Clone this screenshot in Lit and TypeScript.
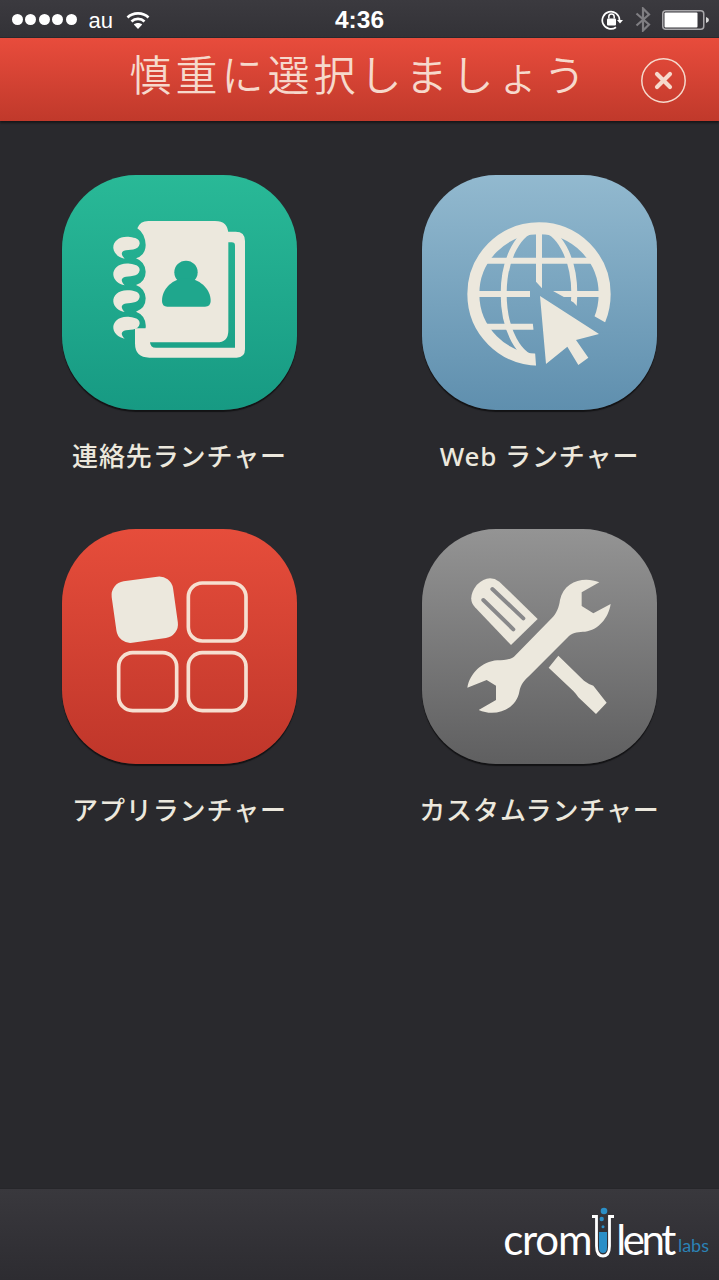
import { LitElement, html, css, svg } from 'lit';
import { customElement } from 'lit/decorators.js';

// Icon paths use one viewBox unit = 1/3 px, so each tile is 705 units wide
const bookIcon = svg`
  <svg viewBox="36 30 705 705">
    <path fill="#ece8dd" d="M255 490V535Q255 578 298 578H560Q585 578 585 553V228Q585 200 557 200H528V232H545Q555 232 555 242V548H318Q300 548 300 530V490Z"/>
    <path fill="#ece8dd" d="M262 190Q270 168 295 168H495Q535 168 535 208V497Q535 532 500 532H258V520Q290 510 287 480Q285 450 258 440Q287 430 287 400Q285 370 258 360Q287 350 287 320Q285 290 258 280Q287 270 287 240Q285 205 262 190Z"/>
    <g fill="#ece8dd">
      <path d="M240 216C208 212 188 230 190 250C192 266 206 278 224 281C214 270 212 262 222 257C236 252 266 258 269 236C270 222 256 218 240 216Z"/>
      <path d="M240 296C208 292 188 310 190 330C192 346 206 358 224 361C214 350 212 342 222 337C236 332 266 338 269 316C270 302 256 298 240 296Z"/>
      <path d="M240 376C208 372 188 390 190 410C192 426 206 438 224 441C214 430 212 422 222 417C236 412 266 418 269 396C270 382 256 378 240 376Z"/>
      <path d="M240 456C208 452 188 470 190 490C192 506 206 518 224 521C214 510 212 502 222 497C236 492 266 498 269 476C270 462 256 458 240 456Z"/>
    </g>
    <circle cx="408" cy="322" r="35" fill="#1fa78d"/>
    <path fill="#1fa78d" d="M336 408C336 370 370 340 408 340C446 340 482 370 482 408Q482 425 465 425H352Q336 425 336 408Z"/>
  </svg>`;

const globeIcon = svg`
  <svg viewBox="36 30 705 705">
    <defs>
      <mask id="cut" maskUnits="userSpaceOnUse" x="36" y="30" width="705" height="705">
        <rect x="36" y="30" width="705" height="705" fill="#fff"/>
        <path fill="#000" d="M360 335L378 350L396 370L425 376L490 412L503 425L585 472L650 505V660H378V600L370 490L360 396Z"/>
      </mask>
      <clipPath id="disc"><circle cx="387" cy="387" r="205"/></clipPath>
    </defs>
    <g mask="url(#cut)" fill="none" stroke="#ece8dd">
      <circle cx="387" cy="387" r="197" stroke-width="36"/>
      <g clip-path="url(#disc)" stroke-width="18">
        <ellipse cx="387" cy="387" rx="106" ry="195"/>
        <path d="M387 180V600M170 287H604M170 387H604M170 485H604"/>
      </g>
    </g>
    <path fill="#ece8dd" d="M390 393L567 507L498 525L535 578L505 600L472 545L408 597Z"/>
  </svg>`;

const appsIcon = svg`
  <svg viewBox="36 27 705 705">
    <rect x="191" y="176" width="186" height="186" rx="42" fill="#ece8dd" transform="rotate(-8 285 267)"/>
    <g fill="none" stroke="#f6dfd0" stroke-width="11">
      <rect x="415" y="189" width="173" height="174" rx="42"/>
      <rect x="206" y="398" width="174" height="174" rx="42"/>
      <rect x="415" y="398" width="173" height="174" rx="42"/>
    </g>
  </svg>`;

const toolsIcon = svg`
  <svg viewBox="36 27 705 705">
    <path fill="#ece8dd" d="M303 375L195 262Q170 235 200 195Q235 160 268 185L383 297Z"/>
    <path fill="none" stroke="#88888a" stroke-width="12" stroke-linecap="round" d="M247 207L340 295M220 240L310 328"/>
    <path fill="#ece8dd" d="M568 187C520 168 462 185 450 240C447 262 440 280 425 295L312 410C295 422 280 420 262 421C215 425 180 460 172 503L230 480L258 497V540L206 570C255 592 318 570 328 515C332 492 345 478 358 467L477 348C490 336 508 336 525 335C565 330 595 295 602 252L550 280L515 258V217Z"/>
    <path fill="#ece8dd" d="M445 407L522 482Q535 492 550 497L590 548L558 582L505 532Q497 520 490 513L416 443Z"/>
  </svg>`;

const launchers = [
  { label: '連絡先ランチャー', tone: 'green', icon: bookIcon },
  { label: 'Web ランチャー', tone: 'blue', icon: globeIcon },
  { label: 'アプリランチャー', tone: 'red', icon: appsIcon },
  { label: 'カスタムランチャー', tone: 'gray', icon: toolsIcon },
];

@customElement('app-root')
export class AppRoot extends LitElement {
  static styles = css`
    :host {
      display: flex;
      flex-direction: column;
      width: 719px;
      height: 1280px;
      overflow: hidden;
      background: #29292d;
      font-family: "Liberation Sans", "Noto Sans CJK JP", sans-serif;
    }

    /* Status bar */
    .status {
      height: 37px;
      flex: none;
      box-sizing: border-box;
      padding-top: 2px;
      display: grid;
      grid-template-columns: 1fr auto 1fr;
      align-items: center;
      color: #fff;
      background: linear-gradient(#3b3a3f, #333237);
    }
    .status-left, .status-right {
      display: flex;
      align-items: center;
    }
    .status-left { padding-left: 12px; }
    .status-right { justify-content: flex-end; padding-right: 10px; }
    .dots { display: flex; gap: 2.4px; }
    .dots i {
      width: 11px;
      height: 11px;
      border-radius: 50%;
      background: #fff;
    }
    .carrier { font-size: 22px; margin: 2px 0 0 12px; }
    .wifi { width: 24px; height: 18px; margin-left: 13px; }
    .time { font-size: 24.500px; font-weight: 700; }
    .rotation { width: 23px; height: 20px; }
    .bluetooth { width: 16px; height: 25px; margin-left: 11px; }
    .battery { width: 47px; height: 20px; margin-left: 11px; }

    /* Title bar */
    .header {
      height: 83px;
      flex: none;
      display: flex;
      align-items: center;
      justify-content: center;
      position: relative;
      margin-top: 1px;
      background: linear-gradient(#e84c3c, #c0392b);
      box-shadow: 0 2px 2px rgba(0, 0, 0, 0.45);
    }
    .title {
      font-family: "Noto Sans CJK JP", sans-serif;
      font-size: 42px;
      font-weight: 350;
      letter-spacing: 4px;
      color: #f6d9cc;
      margin-top: -15px;
      white-space: nowrap;
    }
    .close {
      position: absolute;
      right: 33px;
      top: 20px;
      width: 45px;
      height: 45px;
    }

    /* Launcher grid */
    .grid {
      flex: 1;
      display: grid;
      grid-template-columns: 359px 359px;
      column-gap: 1px;
      grid-auto-rows: max-content;
      row-gap: 55px;
      padding-top: 54px;
    }
    .launcher {
      display: flex;
      flex-direction: column;
      align-items: center;
    }
    .tile {
      width: 235px;
      height: 235px;
      border-radius: 74px;
      overflow: hidden;
      box-shadow: 0 2px 1px rgba(0, 0, 0, 0.55);
    }
    .tile svg { display: block; width: 100%; height: 100%; }
    .green { background: linear-gradient(#29b997, #179a83); }
    .blue { background: linear-gradient(#92b9cf, #5f8fae); }
    .red { background: linear-gradient(#e64d3b, #bf362a); }
    .gray { background: linear-gradient(#949494, #5f5f60); }
    .label {
      margin-top: 28px;
      height: 36px;
      line-height: 36px;
      font-family: "Noto Sans", "Noto Sans CJK JP", sans-serif;
      font-size: 26px;
      font-weight: 500;
      letter-spacing: 0.9px;
      color: #ece8dd;
      white-space: nowrap;
    }

    /* Footer with the vendor logo */
    .footer {
      height: 92px;
      flex: none;
      display: flex;
      justify-content: flex-end;
      background: linear-gradient(#39383d, #2d2c31);
      border-top: 1px solid #26262a;
      box-sizing: border-box;
    }
    .logo {
      display: flex;
      align-items: flex-end;
      padding: 0 10px 21px 0;
      font-family: Lato, sans-serif;
      font-weight: 400;
      font-size: 42px;
      line-height: 40px;
      color: #fff;
      letter-spacing: -1.2px;
    }
    .tube { width: 24px; height: 51px; margin: 0 1px 1px 0; }
    .lent { letter-spacing: -3.4px; }
    .labs {
      font-size: 18px;
      line-height: 24px;
      color: #2b82b5;
      letter-spacing: 0;
      margin: 0 0 2px 5px;
    }
  `;

  render() {
    return html`
      <div class="status">
        <div class="status-left">
          <div class="dots"><i></i><i></i><i></i><i></i><i></i></div>
          <span class="carrier">au</span>
          <svg class="wifi" viewBox="0 0 24 18" fill="none" stroke="#fff" stroke-width="2.6">
            <path d="M1.5 6.5C7 1 17 1 22.5 6.5"/>
            <path d="M5.5 10.5C9 7 15 7 18.5 10.5"/>
            <path fill="#fff" stroke="none" d="M12 18L7.8 13.5C10 11.5 14 11.5 16.2 13.5Z"/>
          </svg>
        </div>
        <div class="time">4:36</div>
        <div class="status-right">
          <svg class="rotation" viewBox="0 0 23 20">
            <path fill="none" stroke="#fff" stroke-width="1.7" d="M18.5 10A8.6 8.6 0 1 0 15 17.2"/>
            <path fill="#fff" d="M16 10H22L19 13.5Z"/>
            <rect x="6" y="8.5" width="9" height="7" rx="1" fill="#fff"/>
            <path fill="none" stroke="#fff" stroke-width="1.5" d="M7.8 8.5V6.8a2.7 2.7 0 0 1 5.4 0V8.5"/>
          </svg>
          <svg class="bluetooth" viewBox="0 0 16 25" fill="none" stroke="#7f7e82" stroke-width="2.2">
            <path d="M1.5 6.5L14 17.5L8 23.5V1.5L14 7.5L1.5 18.5"/>
          </svg>
          <svg class="battery" viewBox="0 0 47 20">
            <rect x="0.75" y="0.75" width="41" height="18.5" rx="3" fill="none" stroke="#a9a8ab" stroke-width="1.5"/>
            <rect x="2.5" y="2.5" width="33" height="15" rx="1" fill="#fff"/>
            <path fill="#d8d8d8" d="M44 7Q47 8 47 10T44 13Z"/>
          </svg>
        </div>
      </div>

      <div class="header">
        <div class="title">慎重に選択しましょう</div>
        <svg class="close" viewBox="0 0 45 45" fill="none" stroke="#f6d9cc">
          <circle cx="22.5" cy="22.5" r="21.7" stroke-width="1.5"/>
          <path stroke-width="4.2" stroke-linecap="round" d="M16 16L29 29M29 16L16 29"/>
        </svg>
      </div>

      <div class="grid">
        ${launchers.map(item => html`
          <div class="launcher">
            <div class="tile ${item.tone}">${item.icon}</div>
            <div class="label">${item.label}</div>
          </div>
        `)}
      </div>

      <div class="footer">
        <div class="logo">
          <span>crom</span>
          <svg class="tube" viewBox="0 0 24 51">
            <circle cx="13" cy="4" r="3.3" fill="#2b8fc7"/>
            <circle cx="10.7" cy="12" r="2.2" fill="#2b8fc7"/>
            <circle cx="12" cy="19.700" r="1.5" fill="#2b8fc7"/>
            <path fill="#2b8fc7" d="M8 25H16V41Q16 46 12 46Q8 46 8 41Z"/>
            <path fill="none" stroke="#fff" stroke-width="2.8" d="M1 9.500H5.500V39Q5.500 49 12 49Q18.500 49 18.500 39V9.500H23"/>
          </svg>
          <span class="lent">lent</span>
          <span class="labs">labs</span>
        </div>
      </div>
    `;
  }
}
